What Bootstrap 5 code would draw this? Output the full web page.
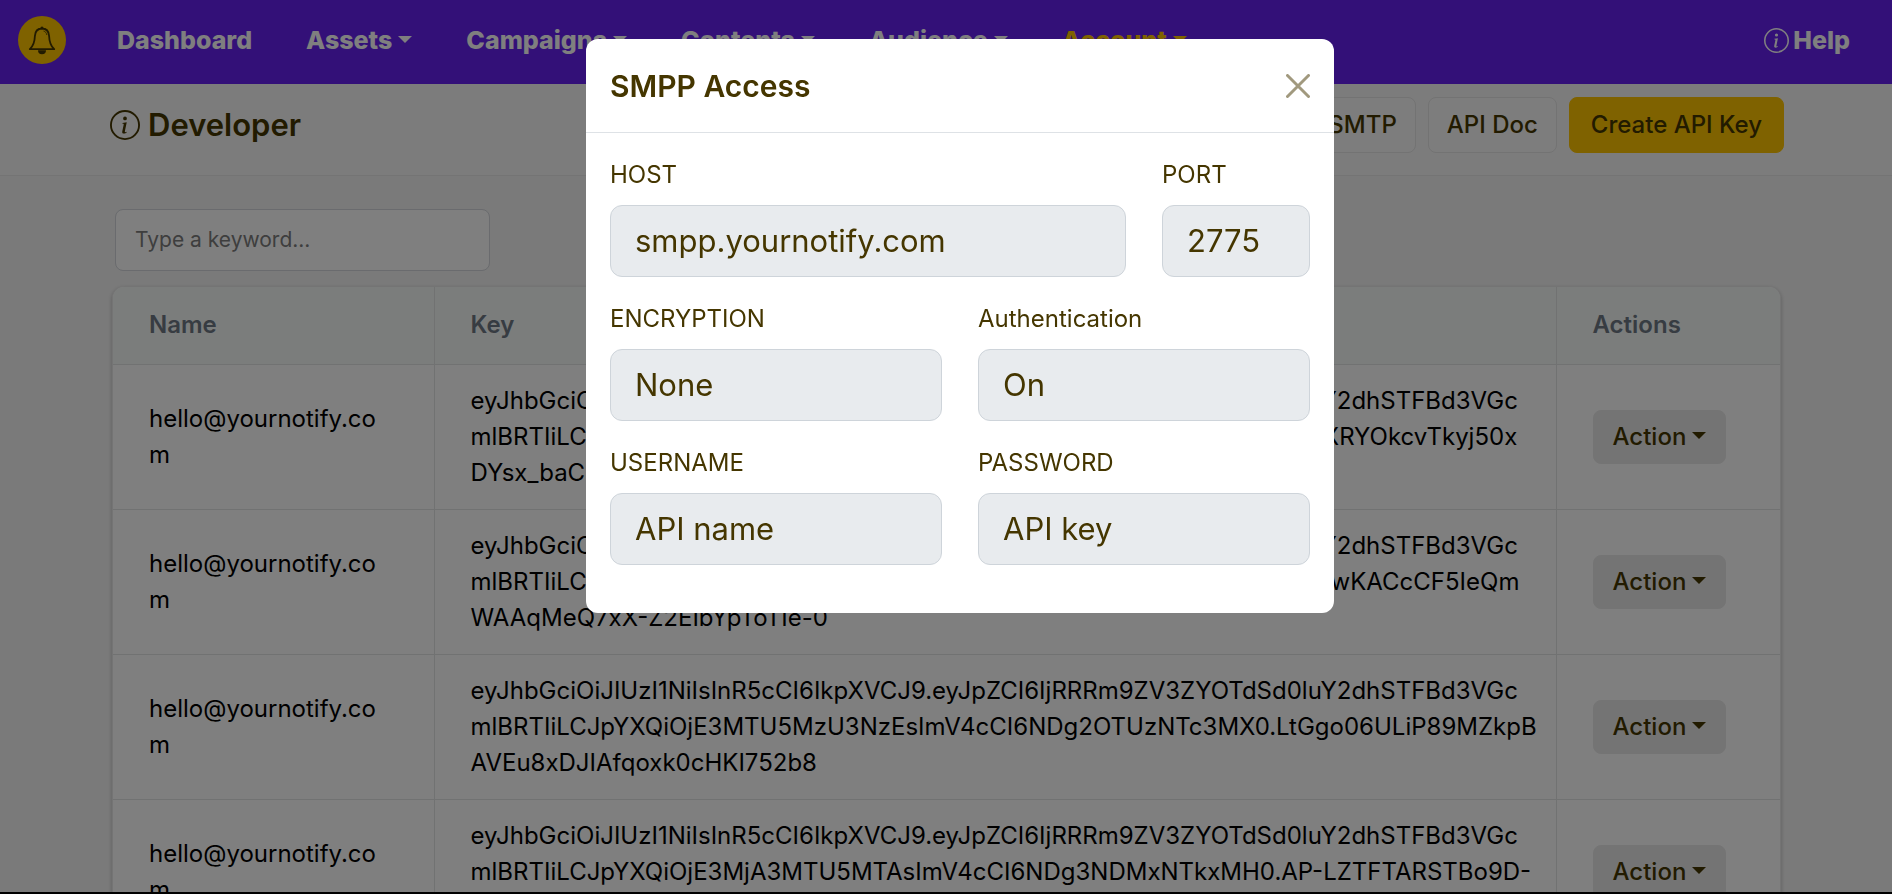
<!DOCTYPE html>
<html lang="en">
<head>
<meta charset="utf-8">
<meta name="viewport" content="width=device-width, initial-scale=1">
<title>Developer</title>
<link href="https://cdn.jsdelivr.net/npm/bootstrap@5.3.0/dist/css/bootstrap.min.css" rel="stylesheet">
<style>
  body {
    font-family: Inter, "Open Sans", sans-serif;
    font-size: 24px;
    line-height: 36px;
    color: #453600;
    background: #f5f5f5;
  }
  .topbar { background: #6620f0; height: 84px; padding: 0 42px 4px 18px; font-size: 25px; font-weight: 800; }
  .topbar a { color: #fff; text-decoration: none; }
  .topbar a.current { color: #ffc400; }
  .brand-mark { width: 48px; height: 48px; }
  .main-menu { margin-left: 51px; gap: 54px; }
  .caret::after { content: ""; display: inline-block; margin-left: 6px; vertical-align: 6px; border: 7px solid transparent; border-top-color: currentColor; border-bottom: 0; }
  .help-icon { width: 25px; height: 25px; }
  .page-head { background: #f9f9f9; border-bottom: 1px solid #e9e9e9; height: 92px; padding: 0 108px 10px 110px; }
  .page-title { font-size: 31px; font-weight: 600; line-height: 36px; color: #453600; }
  .title-icon { width: 30px; height: 30px; }
  .btn-page { --bs-btn-font-size: 24px; --bs-btn-font-weight: 500; --bs-btn-line-height: 36px; --bs-btn-padding-x: 18px; --bs-btn-padding-y: 9px; --bs-btn-border-radius: 8px; --bs-btn-color: #453600; --bs-btn-border-color: #e6e6e6; }
  .btn-plain { --bs-btn-bg: #fafafa; }
  .btn-create { --bs-btn-bg: #ffc400; --bs-btn-border-color: #ffc400; --bs-btn-padding-x: 21px; }
  .content { padding: 33px 111px 0 112px; }
  .search-box { width: 375px; margin-left: 3px; padding: 12px 19px; font-size: 21px; line-height: 36px; border-radius: 8px; border-color: #d4d7dc; }
  .search-box::placeholder { color: #7c7c7c; }
  .key-card { margin-top: 15px; border-radius: 12px; overflow: hidden; background: #fff; border: 1px solid #e9e9e9; border-bottom: 0; box-shadow: 0 2px 4px rgba(0, 0, 0, .25); }
  .key-table { table-layout: fixed; margin: 0; line-height: 36px; --bs-table-color: #000; --bs-table-bg: #fff; }
  .key-table th, .key-table td { padding: 18px 36px; border-bottom: 1px solid #e2e4e4; border-right: 1px solid #e2e4e4; vertical-align: middle; color: #000; }
  .key-table th { padding: 20px 36px 21px; font-weight: 600; color: #6f7885; background: #f7fbf9; }
  .key-table tr > :last-child { border-right: 0; }
  .key-table .key-text { white-space: nowrap; }
  .col-name { width: 321px; }
  .col-actions { width: 224px; }
  .btn-action { --bs-btn-font-size: 24px; --bs-btn-font-weight: 500; --bs-btn-line-height: 36px; --bs-btn-padding-x: 19px; --bs-btn-padding-y: 8px; --bs-btn-border-radius: 8px; --bs-btn-color: #453600; --bs-btn-bg: #e9e9e9; --bs-btn-border-color: #e9e9e9; }
  .modal-backdrop { --bs-backdrop-opacity: .5; }
  .modal { --bs-modal-width: 748px; --bs-modal-margin: 39px; --bs-modal-padding: 24px; --bs-modal-border-radius: 12px; --bs-modal-color: #453600; padding-left: 28px; }
  .modal-content { border: 0; }
  .modal-header { padding: 29px 24px 28px; }
  .modal-title { font-size: 30px; font-weight: 600; line-height: 36px; color: #453600; }
  .close-x { border: 0; background: none; padding: 0; line-height: 0; opacity: .5; }
  .close-x svg { width: 24px; height: 24px; }
  .field-row { --bs-gutter-x: 36px; margin-bottom: 24px; }
  .field-row label { display: block; margin-bottom: 12px; }
  .field-row .form-control { padding: 17px 24px; font-size: 31px; line-height: 36px; border-radius: 12px; border-color: #ced4da; background: #e8ebee; color: #453600; }
  .screen-edge { height: 2px; background: #000; z-index: 1060; }
</style>
</head>
<body class="modal-open overflow-hidden">

<svg class="d-none" aria-hidden="true">
  <symbol id="info" viewBox="0 0 16 16">
    <path fill="currentColor" d="M8 15A7 7 0 1 1 8 1a7 7 0 0 1 0 14zm0 1A8 8 0 1 0 8 0a8 8 0 0 0 0 16z"/>
    <path fill="currentColor" d="m8.930 6.588-2.290.287-.082.380.450.083c.294.070.352.176.288.469l-.738 3.468c-.194.897.105 1.319.808 1.319.545 0 1.178-.252 1.465-.598l.088-.416c-.2.176-.492.246-.686.246-.275 0-.375-.193-.304-.533L8.930 6.588zM9 4.500a1 1 0 1 1-2 0 1 1 0 0 1 2 0z"/>
  </symbol>
</svg>

<nav class="topbar d-flex align-items-center">
  <a href="#" aria-label="Home" class="d-flex">
    <svg class="brand-mark" viewBox="0 0 48 48">
      <circle cx="24" cy="24" r="24" fill="#ffc400"/>
      <path d="M24 12.500c-4.500 0-6.800 3.200-7.100 7.500-.2 6-1 9.500-5.100 13.200h24.400c-4.100-3.700-4.900-7.200-5.100-13.200-.3-4.300-2.600-7.500-7.100-7.500z" fill="none" stroke="#453600" stroke-width="1.800" stroke-linejoin="round"/>
      <path d="M22.300 12.200a1.700 1.700 0 1 1 3.400 0zM20 34.200h8a4 4 0 0 1-8 0z" fill="#453600"/>
      <path d="M25.500 15c2 .5 3 2 3.300 4" fill="none" stroke="#453600" stroke-width=".8"/>
    </svg>
  </a>
  <ul class="main-menu list-unstyled d-flex mb-0 text-nowrap">
    <li><a href="#">Dashboard</a></li>
    <li><a href="#" class="caret">Assets</a></li>
    <li><a href="#" class="caret">Campaigns</a></li>
    <li><a href="#" class="caret">Contents</a></li>
    <li><a href="#" class="caret">Audience</a></li>
    <li><a href="#" class="caret current">Account</a></li>
  </ul>
  <a href="#" class="ms-auto d-flex align-items-center gap-1"><svg class="help-icon"><use href="#info"/></svg>Help</a>
</nav>

<header class="page-head d-flex align-items-center justify-content-between">
  <h1 class="page-title d-flex align-items-center gap-2 mb-0"><svg class="title-icon"><use href="#info"/></svg>Developer</h1>
  <div class="d-flex gap-2">
    <button type="button" class="btn btn-page btn-plain me-1">SMTP</button>
    <button type="button" class="btn btn-page btn-plain me-1">API Doc</button>
    <button type="button" class="btn btn-page btn-create">Create API Key</button>
  </div>
</header>

<main class="content">
  <input type="search" class="form-control search-box" placeholder="Type a keyword..." aria-label="Type a keyword">
  <div class="key-card">
    <table class="table key-table">
      <colgroup><col class="col-name"><col><col class="col-actions"></colgroup>
      <thead><tr><th scope="col">Name</th><th scope="col">Key</th><th scope="col">Actions</th></tr></thead>
      <tbody>
        <tr>
          <td>hello@yournotify.co<br>m</td>
          <td class="key-text">eyJhbGciOiJIUzI1NiIsInR5cCI6IkpXVCJ9.eyJpZCI6IjRRRm9ZV3ZYOTdSd0luY2dhSTFBd3VGc<br>mlBRTIiLCJpYXQiOjE3MTUyNzE3NTYsImV4cCI6NDg2NDg3MTc1Nn0.aQ7nXRYOkcvTkyj50x<br>DYsx_baC4dGk2nQ7vWm</td>
          <td><button type="button" class="btn btn-action caret">Action</button></td>
        </tr>
        <tr>
          <td>hello@yournotify.co<br>m</td>
          <td class="key-text">eyJhbGciOiJIUzI1NiIsInR5cCI6IkpXVCJ9.eyJpZCI6IjRRRm9ZV3ZYOTdSd0luY2dhSTFBd3VGc<br>mlBRTIiLCJpYXQiOjE3MTU5MzU1NDIsImV4cCI6NDg2OTUzNTU0Mn0.d8RvwKACcCF5IeQm<br>WAAqMeQ7xX-Z2EIbYpToTIe-0</td>
          <td><button type="button" class="btn btn-action caret">Action</button></td>
        </tr>
        <tr>
          <td>hello@yournotify.co<br>m</td>
          <td class="key-text">eyJhbGciOiJIUzI1NiIsInR5cCI6IkpXVCJ9.eyJpZCI6IjRRRm9ZV3ZYOTdSd0luY2dhSTFBd3VGc<br>mlBRTIiLCJpYXQiOjE3MTU5MzU3NzEsImV4cCI6NDg2OTUzNTc3MX0.LtGgo06ULiP89MZkpB<br>AVEu8xDJIAfqoxk0cHKI752b8</td>
          <td><button type="button" class="btn btn-action caret">Action</button></td>
        </tr>
        <tr>
          <td>hello@yournotify.co<br>m</td>
          <td class="key-text">eyJhbGciOiJIUzI1NiIsInR5cCI6IkpXVCJ9.eyJpZCI6IjRRRm9ZV3ZYOTdSd0luY2dhSTFBd3VGc<br>mlBRTIiLCJpYXQiOjE3MjA3MTU5MTAsImV4cCI6NDg3NDMxNTkxMH0.AP-LZTFTARSTBo9D-<br>&nbsp;</td>
          <td><button type="button" class="btn btn-action caret">Action</button></td>
        </tr>
      </tbody>
    </table>
  </div>
</main>

<div class="modal-backdrop show"></div>
<div class="modal d-block show" tabindex="-1" role="dialog" aria-modal="true" aria-labelledby="smppTitle">
  <div class="modal-dialog">
    <div class="modal-content">
      <div class="modal-header">
        <h2 class="modal-title" id="smppTitle">SMPP Access</h2>
        <button type="button" class="close-x ms-auto" aria-label="Close">
          <svg viewBox="0 0 24 24"><path d="M1.500 1.500l21 21M22.500 1.500l-21 21" stroke="#453600" stroke-width="3" stroke-linecap="round"/></svg>
        </button>
      </div>
      <form class="modal-body">
        <div class="row field-row">
          <div class="col-9"><label for="host">HOST</label><input id="host" class="form-control" value="smpp.yournotify.com" readonly></div>
          <div class="col-3"><label for="port">PORT</label><input id="port" class="form-control" value="2775" readonly></div>
        </div>
        <div class="row field-row">
          <div class="col-6"><label for="enc">ENCRYPTION</label><input id="enc" class="form-control" value="None" readonly></div>
          <div class="col-6"><label for="auth">Authentication</label><input id="auth" class="form-control" value="On" readonly></div>
        </div>
        <div class="row field-row">
          <div class="col-6"><label for="user">USERNAME</label><input id="user" class="form-control" value="API name" readonly></div>
          <div class="col-6"><label for="pass">PASSWORD</label><input id="pass" class="form-control" value="API key" readonly></div>
        </div>
      </form>
    </div>
  </div>
</div>
<div class="screen-edge fixed-bottom"></div>

<script src="https://cdn.jsdelivr.net/npm/bootstrap@5.3.0/dist/js/bootstrap.bundle.min.js"></script>
</body>
</html>
